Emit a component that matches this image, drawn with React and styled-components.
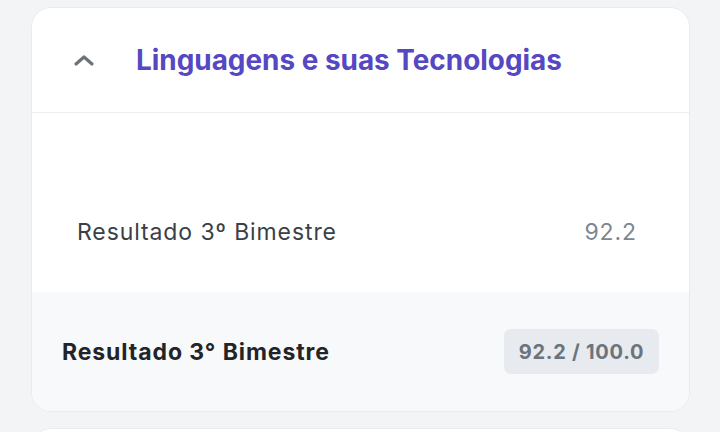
import React from "react";
import styled, { createGlobalStyle } from "styled-components";

const GlobalStyle = createGlobalStyle`
  html, body {
    margin: 0;
    padding: 0;
    background: #f3f4f6;
    font-family: Inter, "Noto Sans", sans-serif;
  }
`;

const Page = styled.div`
  display: flex;
  flex-direction: column;
  gap: 16px;
  padding: 7px 30px 0 31px;
  height: 432px;
  overflow: hidden;
  box-sizing: border-box;
`;

const Card = styled.section`
  background: #ffffff;
  border: 1px solid #e9ebee;
  border-radius: 20px;
  overflow: hidden;
  flex-shrink: 0;
`;

const Header = styled.div`
  display: flex;
  align-items: center;
  gap: 40px;
  height: 104px;
  padding: 0 40px;
  border-bottom: 1px solid #eceef0;
`;

const Toggle = styled.button`
  display: flex;
  align-items: center;
  justify-content: center;
  border: 0;
  background: none;
  padding: 0;
  width: 24px;
  color: #6b7378;
`;

const Title = styled.h2`
  margin: 0;
  font-size: 27.9px;
  font-weight: 700;
  color: #5548c2;
`;

const Body = styled.div`
  padding: 99px 52px 40px 45px;
`;

const Row = styled.div`
  display: flex;
  justify-content: space-between;
  align-items: center;
  height: 40px;
`;

const Label = styled.span`
  font-size: 23px;
  color: ${(p) => (p.$strong ? "#212529" : "#3b4046")};
  font-weight: ${(p) => (p.$strong ? 700 : 400)};
  letter-spacing: 0.9px;
`;

const Value = styled.span`
  font-size: 23px;
  color: #7c8791;
  letter-spacing: 0.9px;
`;

const Footer = styled.div`
  display: flex;
  justify-content: space-between;
  align-items: center;
  height: 119px;
  padding: 0 30px 0 30px;
  background: #f8f9fa;
`;

const Badge = styled.span`
  display: inline-flex;
  align-items: center;
  justify-content: center;
  height: 45px;
  width: 155px;
  border-radius: 7px;
  background: #e7eaee;
  color: #6b747d;
  font-size: 20px;
  font-weight: 700;
  letter-spacing: 0.75px;
`;

function ChevronUp() {
  return (
    <svg width="22" height="14" viewBox="0 0 22 14" fill="none">
      <path
        d="M3 11L11 4L19 11"
        stroke="currentColor"
        strokeWidth="3.2"
        strokeLinecap="round"
        strokeLinejoin="round"
      />
    </svg>
  );
}

export default function App() {
  return (
    <>
      <GlobalStyle />
      <Page>
        <Card>
          <Header>
            <Toggle aria-label="Recolher">
              <ChevronUp />
            </Toggle>
            <Title>Linguagens e suas Tecnologias</Title>
          </Header>
          <Body>
            <Row>
              <Label>Resultado 3º Bimestre</Label>
              <Value>92.2</Value>
            </Row>
          </Body>
          <Footer>
            <Label $strong>Resultado 3° Bimestre</Label>
            <Badge>92.2 / 100.0</Badge>
          </Footer>
        </Card>
        <Card style={{ height: 80 }} />
      </Page>
    </>
  );
}
